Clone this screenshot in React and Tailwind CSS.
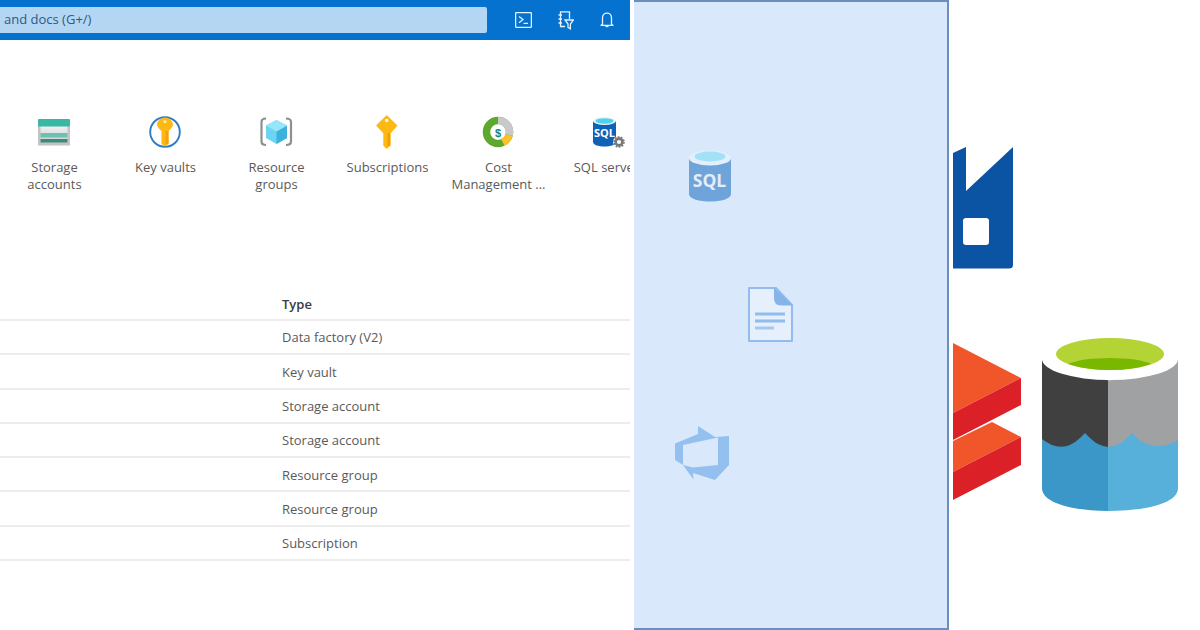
import React from "react";

const font = { fontFamily: '"Open Sans", "Noto Sans", sans-serif' };

function Storage() {
  return (
    <svg width="32" height="27" viewBox="38 118 32 27">
      <defs>
        <linearGradient id="stg" x1="0" y1="0" x2="0" y2="1">
          <stop offset="0" stopColor="#f0f0f0" />
          <stop offset="1" stopColor="#cfcfcf" />
        </linearGradient>
      </defs>
      <rect x="38" y="125" width="32" height="19.5" fill="#c4c4c4" />
      <rect x="40.500" y="125" width="27" height="16" fill="url(#stg)" />
      <rect x="38" y="118" width="32" height="7.5" rx="1" fill="#38b8a5" />
      <rect x="40.500" y="132" width="27" height="4.5" fill="#6ac2b2" />
      <rect x="40.500" y="138" width="27" height="3.5" fill="#3d8a7d" />
    </svg>
  );
}
function KeyVault() {
  return (
    <svg width="32" height="32" viewBox="150 116 32 32">
      <circle cx="166" cy="132" r="14.8" fill="#fff" stroke="#2f7cc4" strokeWidth="1.9" />
      <path d="M166 117.500 C170 117.500 174 121 174 124.500 C174 127 171 129.500 169.500 131 V144 L166 146.500 L162.500 144 V131 C161 129.500 158 127 158 124.500 C158 121 162 117.500 166 117.500 Z" fill="#fdb813" />
      <circle cx="166" cy="121.500" r="1.6" fill="#fff0b5" />
      <rect x="166.500" y="131" width="3" height="13" fill="#f5a20c" />
    </svg>
  );
}
function ResourceGroups() {
  return (
    <svg width="33" height="30" viewBox="260 117 33 30">
      <path d="M266 118.500 Q261.500 118.500 261.500 122 V141.500 Q261.500 145 266 145" fill="none" stroke="#8f8f8f" strokeWidth="2.2" />
      <path d="M286 118.500 Q291 118.500 291 122 V141.500 Q291 145 286 145" fill="none" stroke="#8f8f8f" strokeWidth="2.2" />
      <path d="M276.500 120 L287 125.500 V138 L276.500 144 L266 138 V125.500 Z" fill="#6bd4f4" />
      <path d="M276.500 131.500 L287 125.500 V138 L276.500 144 Z" fill="#3fb0dc" />
      <path d="M276.500 120 L287 125.500 L276.500 131.500 L266 125.500 Z" fill="#96e6f9" />
    </svg>
  );
}
function SubKey() {
  return (
    <svg width="22" height="34" viewBox="376 115 22 34">
      <path d="M386.700 116 L396.500 125.500 L390 133 V145 L386.700 148 L384 145.500 V133 L377 125.500 Z" fill="#fdb813" stroke="#fdb813" strokeWidth="1.4" strokeLinejoin="round" />
      <circle cx="386.700" cy="120.500" r="1.700" fill="#fff" />
      <rect x="387.500" y="133" width="2.500" height="13" fill="#f59e0b" />
    </svg>
  );
}
function Cost() {
  return (
    <svg width="32" height="32" viewBox="482 116 32 32">
      <circle cx="498" cy="132" r="11.500" fill="none" stroke="#5da82f" strokeWidth="7.500" />
      <path d="M498 116.700 A15.300 15.300 0 0 1 512.700 136 L505.400 134 A7.700 7.700 0 0 0 498 124.300 Z" fill="#c9c9c9" />
      <path d="M512.700 136 A15.300 15.300 0 0 1 504.500 145.800 L501 138.800 A7.700 7.700 0 0 0 505.400 134 Z" fill="#fcc22d" />
      <circle cx="498" cy="132" r="7.400" fill="#fff" />
      <text x="498" y="136.500" textAnchor="middle" fontSize="11" fontWeight="700" fill="#1b7f79" style={{ fontFamily: '"Liberation Sans", sans-serif' }}>$</text>
    </svg>
  );
}
function SqlServer() {
  return (
    <svg width="34" height="32" viewBox="593 115 34 32">
      <path d="M594 120 V141 C594 147 617 147 617 141 V120 Z" fill="#0f62b8" />
      <ellipse cx="605.500" cy="120" rx="11.500" ry="4" fill="#e8f4fb" />
      <ellipse cx="605.500" cy="120" rx="9" ry="2.700" fill="#4fd3ea" />
      <text x="605.500" y="136" textAnchor="middle" fontSize="11" fontWeight="700" fill="#fff" style={{ fontFamily: '"Open Sans", sans-serif' }}>SQL</text>
      <circle cx="620" cy="141" r="6" fill="#fff" />
      <circle cx="620" cy="141" r="3.400" fill="none" stroke="#77787a" strokeWidth="2.600" />
      <circle cx="620" cy="141" r="5" fill="none" stroke="#77787a" strokeWidth="1.600" strokeDasharray="1.800 1.300" />
    </svg>
  );
}

const tiles = [
  { icon: <Storage />, lines: ["Storage", "accounts"] },
  { icon: <KeyVault />, lines: ["Key vaults"] },
  { icon: <ResourceGroups />, lines: ["Resource", "groups"] },
  { icon: <SubKey />, lines: ["Subscriptions"] },
  { icon: <Cost />, lines: ["Cost", "Management ..."] },
  { icon: <SqlServer />, lines: ["SQL servers"] },
];
const rows = ["Data factory (V2)", "Key vault", "Storage account", "Storage account", "Resource group", "Resource group", "Subscription"];

export default function App() {
  return (
    <div className="flex h-[630px] w-[1200px] overflow-hidden bg-white" style={font}>
      <div className="h-full w-[630px] shrink-0 overflow-hidden">
        <header className="flex h-[40px] items-center bg-[#0572d0]">
          <div className="flex h-[26px] w-[487px] items-center rounded-r-[2px] bg-[#b5d6f3] pl-[4px] text-[13px] text-[#2a5a85]">and docs (G+/)</div>
          <svg className="ml-[28px]" width="17" height="16" viewBox="0 0 17 16" fill="none" stroke="#e8f2fb" strokeWidth="1.3">
            <rect x=".6" y=".6" width="15.800" height="14.800" rx=".8" />
            <path d="M4 4.500 L8 7.600 L4 10.700 M8.500 11.300 H13" />
          </svg>
          <svg className="ml-[25px]" width="17" height="19" viewBox="0 0 17 19" fill="none" stroke="#e8f2fb" strokeWidth="1.3">
            <path d="M8 15.500 H3.500 V.8 H12.500 V8" />
            <path d="M1.500 4 H5 M1.500 8 H5 M1.500 12 H5" />
            <path d="M8 9 H16.400 L13.400 13 V17.800 L11 16.400 V13 Z" />
          </svg>
          <svg className="ml-[26px]" width="14" height="16" viewBox="0 0 14 16" fill="none" stroke="#e8f2fb" strokeWidth="1.3">
            <path d="M2.500 12.300 V6 C2.500 -0.600 11.500 -0.600 11.500 6 V12.300 L13 13.300 H1 Z" strokeLinejoin="round" />
            <path d="M5.500 14.500 H8.500" />
          </svg>
        </header>

        <div className="-ml-[1px] mt-[75px] flex">
          {tiles.map((t, i) => (
            <div key={i} className="flex w-[111px] shrink-0 flex-col items-center">
              <div className="-ml-[1px] flex h-[34px] items-center justify-center">{t.icon}</div>
              <div className="mt-[10px] whitespace-nowrap text-center text-[13px] leading-[17px] text-[#5a5a5a]">
                {t.lines.map((l) => (
                  <div key={l}>{l}</div>
                ))}
              </div>
            </div>
          ))}
        </div>

        <div className="mt-[95px]">
          <div className="flex h-[33px] items-center border-b-2 border-[#ededed] pl-[282px] pt-[2px] text-[13px] font-semibold text-[#3a3a3a]">Type</div>
          {rows.map((r, i) => (
            <div key={i} className="flex h-[34.3px] items-center border-b-2 border-[#ededed] pl-[282px] pt-[2px] text-[13px] text-[#5a5a5a]">{r}</div>
          ))}
        </div>
      </div>

      <div className="ml-[4px] flex h-full w-[315px] shrink-0 flex-col border-y-2 border-r-2 border-[#6c8ebf] bg-[#dae8fc]">
        <svg className="ml-[54px] mt-[148px]" width="43" height="53" viewBox="688 150 43 53">
          <path d="M689 158 V194 C689 204 731 204 731 194 V158 Z" fill="#6fa4da" />
          <ellipse cx="710" cy="158" rx="21" ry="7.500" fill="#e3effc" />
          <ellipse cx="710" cy="156.500" rx="15.500" ry="5" fill="#a3e2f6" />
          <text x="709.500" y="187" textAnchor="middle" fontSize="17.500" fontWeight="700" fill="#e4edf9" style={{ fontFamily: '"Open Sans", sans-serif' }}>SQL</text>
        </svg>
        <svg className="ml-[114px] mt-[84px]" width="46" height="56" viewBox="748 287 46 56">
          <path d="M749 288 H776 L792 305 V341 H749 Z" fill="#e6effc" stroke="#93bcee" strokeWidth="2" strokeLinejoin="round" />
          <path d="M774 287.500 L793 305.500 H781 Q774 305.500 774 298 Z" fill="#84b4ea" />
          <path d="M755 314 H785 M755 321 H785" stroke="#93bcee" strokeWidth="3" />
          <path d="M755 328 H774" stroke="#a6c7f0" strokeWidth="3" />
        </svg>
        <svg className="ml-[40px] mt-[82px]" width="57" height="56" viewBox="674 425 57 56">
          <path d="M698 426 L715 437 L729 436 V465 L715 480 L693 473 L693.500 479.500 L683 465 L693 467.500 L718 465 V437.500 L683 445 V465 L675 460 V443.500 L698 434 Z" fill="#94c0f0" />
        </svg>
      </div>

      <div className="ml-[4px] flex h-full flex-col">
        <svg className="mt-[145px]" width="62" height="125" viewBox="953 145 62 125">
          <path d="M953 153 L966 147 V191 L1013 147 V265 Q1013 268.500 1009 268.500 H953 Z" fill="#0a54a3" />
          <rect x="963" y="218" width="26" height="27" rx="3" fill="#fff" />
        </svg>
        <div className="mt-[73px] flex items-start">
          <svg width="69" height="158" viewBox="953 343 69 158">
            <path d="M953 343 L1021 378 L953 413 Z" fill="#f0562a" />
            <path d="M1021 378 V405 L953 440 V413 Z" fill="#dc2027" />
            <path d="M992 422 L1021 437 L953 472 V441 Z" fill="#f0562a" />
            <path d="M1021 437 V465 L953 500 V472 Z" fill="#dc2027" />
          </svg>
          <svg className="-mt-[5px] ml-[19px]" width="138" height="174" viewBox="1041 338 138 174">
            <path d="M1042 359 V452 H1110 V381 Z" fill="#404040" />
            <path d="M1178 359 V452 H1108 V381 Z" fill="#a0a1a3" />
            <path d="M1042 439 Q1062 455 1080 438 L1085 433 L1090 438 Q1098 446 1108 447 V511 C1080 511 1042 505 1042 488 Z" fill="#3a97c8" />
            <path d="M1108 447 Q1120 446 1127 438 L1132 433 L1138 439 Q1156 453 1178 440 V488 C1178 505 1140 511 1108 511 Z" fill="#56b0da" />
            <ellipse cx="1110" cy="359" rx="68" ry="21" fill="#fff" />
            <ellipse cx="1110" cy="354" rx="54" ry="16" fill="#b4d334" />
            <path d="M1068 364 Q1082 358 1110 358 Q1138 358 1151 364 Q1134 370 1110 370 Q1086 370 1068 364 Z" fill="#7ab800" />
          </svg>
        </div>
      </div>
    </div>
  );
}
